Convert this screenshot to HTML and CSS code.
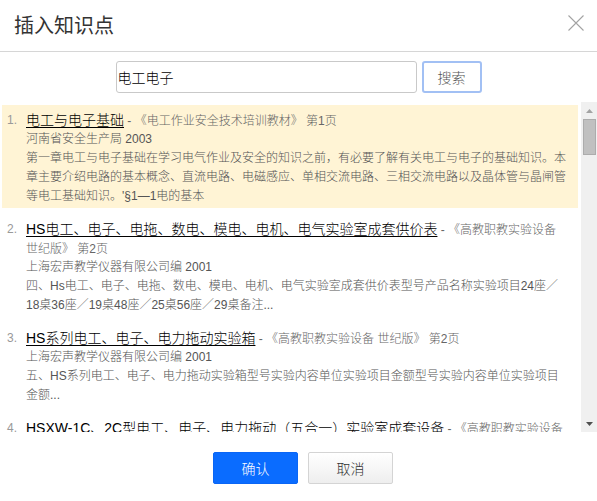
FILE: index.html
```html
<!DOCTYPE html>
<html lang="zh-CN">
<head>
<meta charset="utf-8">
<title>插入知识点</title>
<link rel="stylesheet" href="styles.css">
</head>
<body>
<div class="dialog">
  <header class="hd">
    <h1 class="title">插入知识点</h1>
    <button class="close" aria-label="关闭">
      <svg width="16" height="16" viewBox="0 0 16 16"><path d="M0.5 0.5 L15.5 15.5 M15.5 0.5 L0.5 15.5" stroke="#a3a3a3" stroke-width="1.1" fill="none"/></svg>
    </button>
  </header>

  <div class="search">
    <input class="kw" type="text" value="电工电子">
    <button class="btn-search">搜索</button>
  </div>

  <div class="list-wrap">
    <div class="list">
      <div class="item active">
        <span class="num">1.</span>
        <div class="body">
          <div class="head"><a class="ttl">电工与电子基础</a><span class="src"> - 《电工作业安全技术培训教材》 第1页</span></div>
          <div class="meta">河南省安全生产局 2003</div>
          <div class="desc">第一章电工与电子基础在学习电气作业及安全的知识之前，有必要了解有关电工与电子的基础知识。本章主要介绍电路的基本概念、直流电路、电磁感应、单相交流电路、三相交流电路以及晶体管与晶闸管等电工基础知识。'§1—1电的基本</div>
        </div>
      </div>
      <div class="item">
        <span class="num">2.</span>
        <div class="body">
          <div class="head"><a class="ttl">HS电工、电子、电拖、数电、模电、电机、电气实验室成套供价表</a><span class="src"> - 《高教职教实验设备 世纪版》 第2页</span></div>
          <div class="meta">上海宏声教学仪器有限公司编 2001</div>
          <div class="desc">四、Hs电工、电子、电拖、数电、模电、电机、电气实验室成套供价表型号产品名称实验项目24座／18桌36座／19桌48座／25桌56座／29桌备注...</div>
        </div>
      </div>
      <div class="item">
        <span class="num">3.</span>
        <div class="body">
          <div class="head"><a class="ttl">HS系列电工、电子、电力拖动实验箱</a><span class="src"> - 《高教职教实验设备 世纪版》 第2页</span></div>
          <div class="meta">上海宏声教学仪器有限公司编 2001</div>
          <div class="desc">五、HS系列电工、电子、电力拖动实验箱型号实验内容单位实验项目金额型号实验内容单位实验项目金额...</div>
        </div>
      </div>
      <div class="item">
        <span class="num">4.</span>
        <div class="body">
          <div class="head"><a class="ttl">HSXW-1C、2C型电工、电子、电力拖动（五合一）实验室成套设备</a><span class="src"> - 《高教职教实验设备 世纪版》 第2页</span></div>
          <div class="meta">上海宏声教学仪器有限公司编 2001</div>
          <div class="desc">六、HSXW-1C、2C型电工、电子、电力拖动（五合一）实验室成套设备型号实验内容单位实验项目金额...</div>
        </div>
      </div>
    </div>
    <div class="scrollbar">
      <span class="arr"><svg width="7" height="4" viewBox="0 0 7 4"><polygon points="3.5,0 7,4 0,4" fill="#a3a3a3"/></svg></span>
      <span class="thumb"></span>
      <span class="track"></span>
      <span class="arr"><svg width="7" height="4" viewBox="0 0 7 4"><polygon points="0,0 7,0 3.5,4" fill="#505050"/></svg></span>
    </div>
  </div>

  <footer class="ft">
    <button class="btn ok">确认</button>
    <button class="btn cancel">取消</button>
  </footer>
</div>
</body>
</html>
```

FILE: styles.css
```css
* { box-sizing: border-box; }

body {
  margin: 0;
  background: #fff;
  font-family: "Liberation Sans", "Noto Sans CJK SC", sans-serif;
  font-weight: 300;
}

.dialog {
  width: 597px;
  height: 501px;
  display: flex;
  flex-direction: column;
  overflow: hidden;
}

/* header */
.hd {
  height: 52px;
  flex: none;
  border-bottom: 1px solid #d6d6d6;
  display: flex;
  justify-content: space-between;
  align-items: flex-start;
}

.title {
  margin: 0;
  padding: 16px 0 0 14px;
  font-size: 20px;
  line-height: 20px;
  font-weight: 400;
  color: #333;
}

.close {
  margin: 15px 13px 0 0;
  padding: 0;
  border: 0;
  background: none;
  width: 16px;
  height: 16px;
  display: flex;
}

/* search */
.search {
  flex: none;
  display: flex;
  justify-content: center;
  gap: 5px;
  margin-top: 9px;
}

.kw {
  width: 301px;
  height: 32px;
  margin: 0;
  padding: 0 1px;
  border: 1px solid #c9c9c9;
  border-radius: 3px;
  font-family: inherit;
  font-weight: 300;
  font-size: 14px;
  color: #000;
  outline: none;
}

.btn-search {
  width: 60px;
  height: 32px;
  margin: 0;
  padding: 0;
  border: 2px solid #a2c0f4;
  border-radius: 3px;
  background: #fff;
  font-family: inherit;
  font-weight: 300;
  font-size: 14px;
  color: #555;
}

/* list */
.list-wrap {
  flex: none;
  height: 330px;
  margin-top: 9px;
  padding-left: 2px;
  display: flex;
  gap: 3px;
}

.list {
  flex: 1;
  overflow: hidden;
  padding-top: 3px;
}

.item {
  display: flex;
  padding: 6px 10px 2px 0;
  margin-bottom: 6px;
  line-height: 19px;
}

.item.active {
  background: #fff4d5;
}

.num {
  flex: none;
  width: 24px;
  padding-left: 5px;
  font-size: 12px;
  color: #999;
}

.body {
  flex: 1;
  min-width: 0;
}

.head {
  font-size: 14px;
  line-height: 19px;
}

.ttl {
  color: #000;
  text-decoration: underline;
  text-underline-offset: 2px;
}

.src {
  font-size: 12px;
  line-height: 12px;
  color: #666;
}

.meta,
.desc {
  font-size: 12px;
  line-height: 19px;
  color: #555;
}

/* scrollbar */
.scrollbar {
  flex: none;
  width: 16px;
  background: #f0f0f0;
  display: flex;
  flex-direction: column;
}

.arr {
  height: 17px;
  flex: none;
  display: flex;
  align-items: center;
  justify-content: center;
}

.thumb {
  flex: none;
  height: 36px;
  margin: 0 1px 0 2px;
  background: #c0c0c0;
  border: 1px solid #acacac;
}

.track {
  flex: 1;
}

/* footer */
.ft {
  flex: none;
  display: flex;
  justify-content: center;
  gap: 10px;
  padding: 20px 0 0 9px;
}

.btn {
  width: 85px;
  height: 32px;
  margin: 0;
  padding: 0;
  border-radius: 2px;
  font-family: inherit;
  font-weight: 300;
  font-size: 14px;
}

.ok {
  background: #0a6cff;
  border: 1px solid #0a66f5;
  color: #fff;
}

.cancel {
  background: linear-gradient(#ffffff, #eeeeee);
  border: 1px solid #d4d4d4;
  color: #333;
}
```
